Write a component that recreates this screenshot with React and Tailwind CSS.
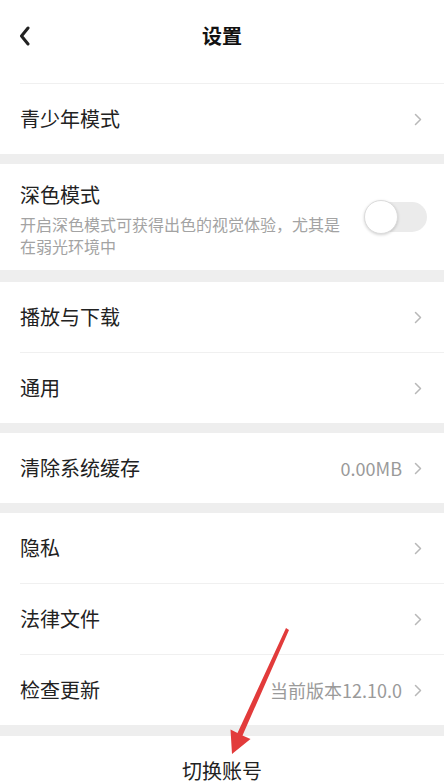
import React from 'react';

const FONT = { fontFamily: '"Noto Sans CJK SC", "Noto Sans", sans-serif' };

function Chevron() {
  return (
    <svg width="8" height="13" viewBox="0 0 8 13" className="shrink-0">
      <polyline points="1.5,1.5 6.5,6.5 1.5,11.5" fill="none" stroke="#b8b8b8" strokeWidth="1.5" strokeLinecap="round" strokeLinejoin="round" />
    </svg>
  );
}

function Row({ label, value }) {
  return (
    <div className="flex h-[70px] items-center pl-5 pr-[22px]">
      <span className="flex-1 text-[20px] leading-7 text-[#222]">{label}</span>
      {value && <span className="mr-3 text-[18px] text-[#9a9a9a]">{value}</span>}
      <Chevron />
    </div>
  );
}

const Divider = () => <div className="ml-5 h-px bg-[#f0f0f0]" />;
const Gap = ({ h = 'h-[10px]' }) => <div className={`${h} bg-[#eeeeee]`} />;

export default function App() {
  return (
    <div className="relative h-[781px] w-[444px] overflow-hidden bg-[#eeeeee]" style={FONT}>
      <div className="bg-white">
        <header className="relative flex h-[83px] items-start justify-center pt-[22px]">
          <svg width="12" height="20" viewBox="0 0 12 20" className="absolute left-[19px] top-[26px]">
            <polyline points="9,2 2.5,10 9,18" fill="none" stroke="#222" strokeWidth="3" strokeLinecap="round" strokeLinejoin="round" />
          </svg>
          <h1 className="text-[20px] font-bold leading-7 text-[#111]">设置</h1>
        </header>
        <Divider />
        <Row label="青少年模式" />
      </div>

      <Gap />

      <div className="flex items-center bg-white pb-[13px] pl-5 pr-[17px] pt-[17px]">
        <div className="w-[326px]">
          <div className="text-[20px] leading-7 text-[#222]">深色模式</div>
          <p className="mt-1 text-[16px] leading-[22px] text-[#a3a3a3]">开启深色模式可获得出色的视觉体验，尤其是在弱光环境中</p>
        </div>
        <div className="flex-1" />
        <div className="relative -mt-[4px] h-[30px] w-[62px] rounded-full bg-[#ebebeb]">
          <div className="absolute -left-px -top-[2px] h-[34px] w-[34px] rounded-full border border-[#dcdcdc] bg-white shadow-[0_1px_3px_rgba(0,0,0,0.18)]" />
        </div>
      </div>

      <Gap h="h-[12px]" />

      <div className="bg-white">
        <Row label="播放与下载" />
        <Divider />
        <Row label="通用" />
      </div>

      <Gap />

      <div className="bg-white">
        <Row label="清除系统缓存" value="0.00MB" />
      </div>

      <Gap />

      <div className="bg-white">
        <Row label="隐私" />
        <Divider />
        <Row label="法律文件" />
        <Divider />
        <Row label="检查更新" value="当前版本12.10.0" />
      </div>

      <Gap h="h-[11px]" />

      <div className="h-[60px] bg-white pt-[21px] text-center text-[20px] leading-7 text-[#222]">切换账号</div>

      <svg className="pointer-events-none absolute left-0 top-0" width="444" height="781" viewBox="0 0 444 781">
        <polygon
          points="286,628 289,630 242.5,735.5 250.5,739 232,754 230.5,729.5 237.5,733"
          fill="#e23b3b"
        />
      </svg>
    </div>
  );
}
